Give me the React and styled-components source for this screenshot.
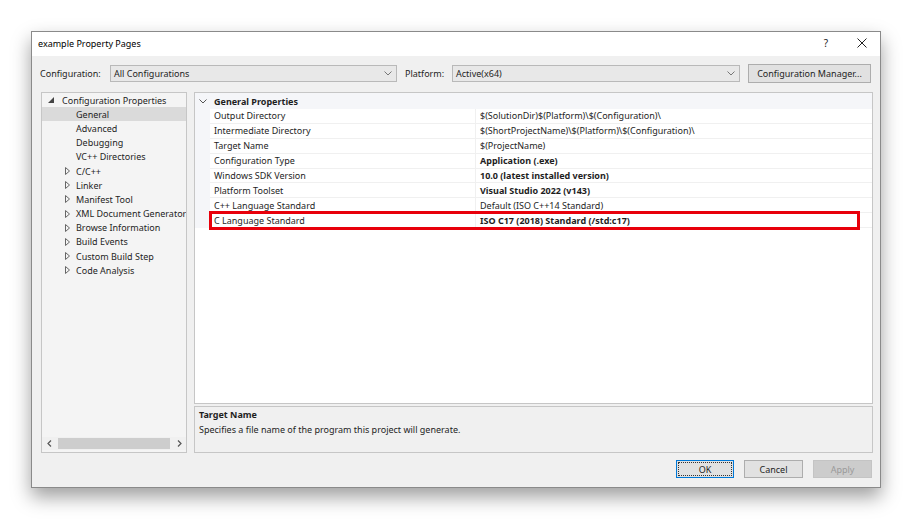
import React from 'react';
import styled, { createGlobalStyle } from 'styled-components';

const GlobalStyle = createGlobalStyle`
  html, body {
    margin: 0;
    padding: 0;
    background: #ffffff;
  }
  body {
    font-family: "Noto Sans", "Open Sans", sans-serif;
    font-size: 9px;
    color: #1e1e1e;
  }
`;

const Page = styled.div`
  width: 912px;
  height: 519px;
  padding: 31px 0 0 31px;
  box-sizing: border-box;
`;

const Window = styled.div`
  width: 850px;
  height: 457px;
  box-sizing: border-box;
  border: 1px solid #8a8a8a;
  background: #f0f0f0;
  box-shadow: 0 9px 18px rgba(0, 0, 0, 0.38);
  display: flex;
  flex-direction: column;
`;

const TitleBar = styled.div`
  height: 24px;
  background: #ffffff;
  display: flex;
  align-items: center;
  padding: 0 0 2px 6px;
  box-sizing: border-box;
`;

const Title = styled.div`
  flex: 1;
  font-size: 9px;
  color: #000;
`;

const TitleButton = styled.div`
  width: 36px;
  height: 22px;
  display: flex;
  align-items: center;
  justify-content: center;
  font-size: 10px;
  color: #222;
`;

const Body = styled.div`
  flex: 1;
  display: flex;
  flex-direction: column;
  padding: 8px 7px 9px 9px;
`;

const Toolbar = styled.div`
  display: flex;
  align-items: center;
  height: 19px;
  margin-left: -1px;
`;

const Label = styled.span`
  width: ${p => p.w}px;
  flex-shrink: 0;
`;

const Combo = styled.div`
  width: ${p => p.w}px;
  height: 17px;
  box-sizing: border-box;
  border: 1px solid #b9b9b9;
  background: #e8e8e8;
  display: flex;
  align-items: center;
  padding: 0 4px 0 3px;
  margin-right: ${p => p.mr || 0}px;
  flex-shrink: 0;
`;

const ComboText = styled.span`
  flex: 1;
`;

const Button = styled.div`
  width: ${p => p.w}px;
  height: ${p => p.h || 18}px;
  box-sizing: border-box;
  border: 1px solid ${p => (p.$primary ? '#0078d7' : p.$disabled ? '#c4c4c4' : '#adadad')};
  background: ${p => (p.$disabled ? '#cccccc' : '#e1e1e1')};
  color: ${p => (p.$disabled ? '#9a9a9a' : '#1e1e1e')};
  display: flex;
  align-items: center;
  justify-content: center;
  position: relative;
  flex-shrink: 0;
  ${p => p.$primary && `
    &::after {
      content: '';
      position: absolute;
      inset: 1px;
      border: 1px dotted #333;
    }
  `}
`;

const Main = styled.div`
  flex: 1;
  display: flex;
  gap: 7px;
  margin-top: 9px;
  min-height: 0;
`;

const Tree = styled.div`
  width: 146px;
  box-sizing: border-box;
  border: 1px solid #c6c6c6;
  background: #f4f4f4;
  display: flex;
  flex-direction: column;
`;

const TreeList = styled.div`
  flex: 1;
`;

const TreeRow = styled.div`
  height: 14.2px;
  display: flex;
  align-items: center;
  padding-left: ${p => p.indent}px;
  background: ${p => (p.selected ? '#dadada' : 'transparent')};
  white-space: nowrap;
  overflow: hidden;
`;

const Expander = styled.span`
  width: ${p => p.w}px;
  display: inline-flex;
  align-items: center;
  flex-shrink: 0;
`;

const HScroll = styled.div`
  height: 13px;
  display: flex;
  align-items: center;
  margin: 0 0 2px 0;
  background: #f0f0f0;
`;

const ScrollArrow = styled.div`
  width: 14px;
  display: flex;
  justify-content: center;
  align-items: center;
`;

const ScrollThumb = styled.div`
  flex: 1;
  height: 11px;
  background: #cdcdcd;
  margin: 0 2px;
`;

const RightCol = styled.div`
  flex: 1;
  display: flex;
  flex-direction: column;
  gap: 2px;
`;

const Grid = styled.div`
  flex: 1;
  box-sizing: border-box;
  border: 1px solid #c6c6c6;
  background: #ffffff;
  position: relative;
`;

const GroupHeader = styled.div`
  height: 16px;
  box-sizing: border-box;
  padding: 0 0 0 4px;
  display: flex;
  align-items: center;
  background: #f5f6f9;
  font-weight: 700;
`;

const GroupChevron = styled.span`
  width: 15px;
  display: inline-flex;
  align-items: center;
`;

const PropRow = styled.div`
  height: 14.9px;
  display: grid;
  grid-template-columns: 15px 266px 1fr;
`;

const Gutter = styled.div`
  background: #f5f6f9;
`;

const Cell = styled.div`
  display: flex;
  align-items: center;
  padding-left: 4px;
  font-weight: ${p => (p.bold ? 700 : 400)};
  border-bottom: 1px solid #f0f0f0;
  border-right: ${p => (p.sep ? '1px solid #f0f0f0' : 'none')};
  white-space: nowrap;
  overflow: hidden;
`;

const Highlight = styled.div`
  position: absolute;
  left: 14px;
  top: 118px;
  width: 651px;
  height: 19px;
  box-sizing: border-box;
  border: 3px solid #e8000b;
  pointer-events: none;
`;

const Description = styled.div`
  height: 47px;
  box-sizing: border-box;
  border: 1px solid #c6c6c6;
  background: #f0f0f0;
  padding: 0 4px;
`;

const DescTitle = styled.div`
  font-weight: 700;
  line-height: 15px;
`;

const DescText = styled.div`
  line-height: 15px;
`;

const Footer = styled.div`
  display: flex;
  justify-content: flex-end;
  gap: 10px;
  margin-top: 7px;
  padding-right: 1px;
`;

const ChevronDown = ({ color = '#777', size = 8 }) => (
  <svg width={size} height={size / 2 + 1} viewBox="0 0 8 5">
    <path d="M0.5 0.5 L4 4 L7.5 0.5" fill="none" stroke={color} strokeWidth="1" />
  </svg>
);

const ExpandedTri = () => (
  <svg width="6" height="6" viewBox="0 0 6 6">
    <path d="M6 0 L6 6 L0 6 Z" fill="#444" />
  </svg>
);

const CollapsedTri = () => (
  <svg width="5" height="8" viewBox="0 0 5 8">
    <path d="M0.5 0.5 L4.5 4 L0.5 7.5 Z" fill="none" stroke="#666" strokeWidth="1" />
  </svg>
);

const CloseIcon = () => (
  <svg width="10" height="10" viewBox="0 0 10 10">
    <path d="M0.5 0.5 L9.5 9.5 M9.5 0.5 L0.5 9.5" stroke="#222" strokeWidth="1" />
  </svg>
);

const Arrow = ({ dir }) => (
  <svg width="5" height="7" viewBox="0 0 5 7">
    <path d={dir === 'left' ? 'M4 0.5 L1 3.5 L4 6.5' : 'M1 0.5 L4 3.5 L1 6.5'} fill="none" stroke="#555" strokeWidth="1.2" />
  </svg>
);

const treeItems = [
  { label: 'General', selected: true },
  { label: 'Advanced' },
  { label: 'Debugging' },
  { label: 'VC++ Directories' },
  { label: 'C/C++', expandable: true },
  { label: 'Linker', expandable: true },
  { label: 'Manifest Tool', expandable: true },
  { label: 'XML Document Generator', expandable: true },
  { label: 'Browse Information', expandable: true },
  { label: 'Build Events', expandable: true },
  { label: 'Custom Build Step', expandable: true },
  { label: 'Code Analysis', expandable: true },
];

const properties = [
  { name: 'Output Directory', value: '$(SolutionDir)$(Platform)\\$(Configuration)\\' },
  { name: 'Intermediate Directory', value: '$(ShortProjectName)\\$(Platform)\\$(Configuration)\\' },
  { name: 'Target Name', value: '$(ProjectName)' },
  { name: 'Configuration Type', value: 'Application (.exe)', bold: true },
  { name: 'Windows SDK Version', value: '10.0 (latest installed version)', bold: true },
  { name: 'Platform Toolset', value: 'Visual Studio 2022 (v143)', bold: true },
  { name: 'C++ Language Standard', value: 'Default (ISO C++14 Standard)' },
  { name: 'C Language Standard', value: 'ISO C17 (2018) Standard (/std:c17)', bold: true },
];

export default function App() {
  return (
    <>
      <GlobalStyle />
      <Page>
        <Window>
          <TitleBar>
            <Title>example Property Pages</Title>
            <TitleButton>?</TitleButton>
            <TitleButton><CloseIcon /></TitleButton>
          </TitleBar>
          <Body>
            <Toolbar>
              <Label w={70}>Configuration:</Label>
              <Combo w={287} mr={8}>
                <ComboText>All Configurations</ComboText>
                <ChevronDown />
              </Combo>
              <Label w={47}>Platform:</Label>
              <Combo w={288} mr={8}>
                <ComboText>Active(x64)</ComboText>
                <ChevronDown />
              </Combo>
              <Button w={123} h={19}>Configuration Manager...</Button>
            </Toolbar>
            <Main>
              <Tree>
                <TreeList>
                  <TreeRow indent={6}>
                    <Expander w={14}><ExpandedTri /></Expander>
                    Configuration Properties
                  </TreeRow>
                  {treeItems.map((item, i) => (
                    <TreeRow key={i} indent={23} selected={item.selected}>
                      <Expander w={11}>{item.expandable && <CollapsedTri />}</Expander>
                      {item.label}
                    </TreeRow>
                  ))}
                </TreeList>
                <HScroll>
                  <ScrollArrow><Arrow dir="left" /></ScrollArrow>
                  <ScrollThumb />
                  <ScrollArrow><Arrow dir="right" /></ScrollArrow>
                </HScroll>
              </Tree>
              <RightCol>
                <Grid>
                  <GroupHeader>
                    <GroupChevron><ChevronDown color="#555" /></GroupChevron>
                    General Properties
                  </GroupHeader>
                  {properties.map((p, i) => (
                    <PropRow key={i}>
                      <Gutter />
                      <Cell sep>{p.name}</Cell>
                      <Cell bold={p.bold}>{p.value}</Cell>
                    </PropRow>
                  ))}
                  <Highlight />
                </Grid>
                <Description>
                  <DescTitle>Target Name</DescTitle>
                  <DescText>Specifies a file name of the program this project will generate.</DescText>
                </Description>
              </RightCol>
            </Main>
            <Footer>
              <Button w={58} $primary>OK</Button>
              <Button w={59}>Cancel</Button>
              <Button w={59} $disabled>Apply</Button>
            </Footer>
          </Body>
        </Window>
      </Page>
    </>
  );
}
